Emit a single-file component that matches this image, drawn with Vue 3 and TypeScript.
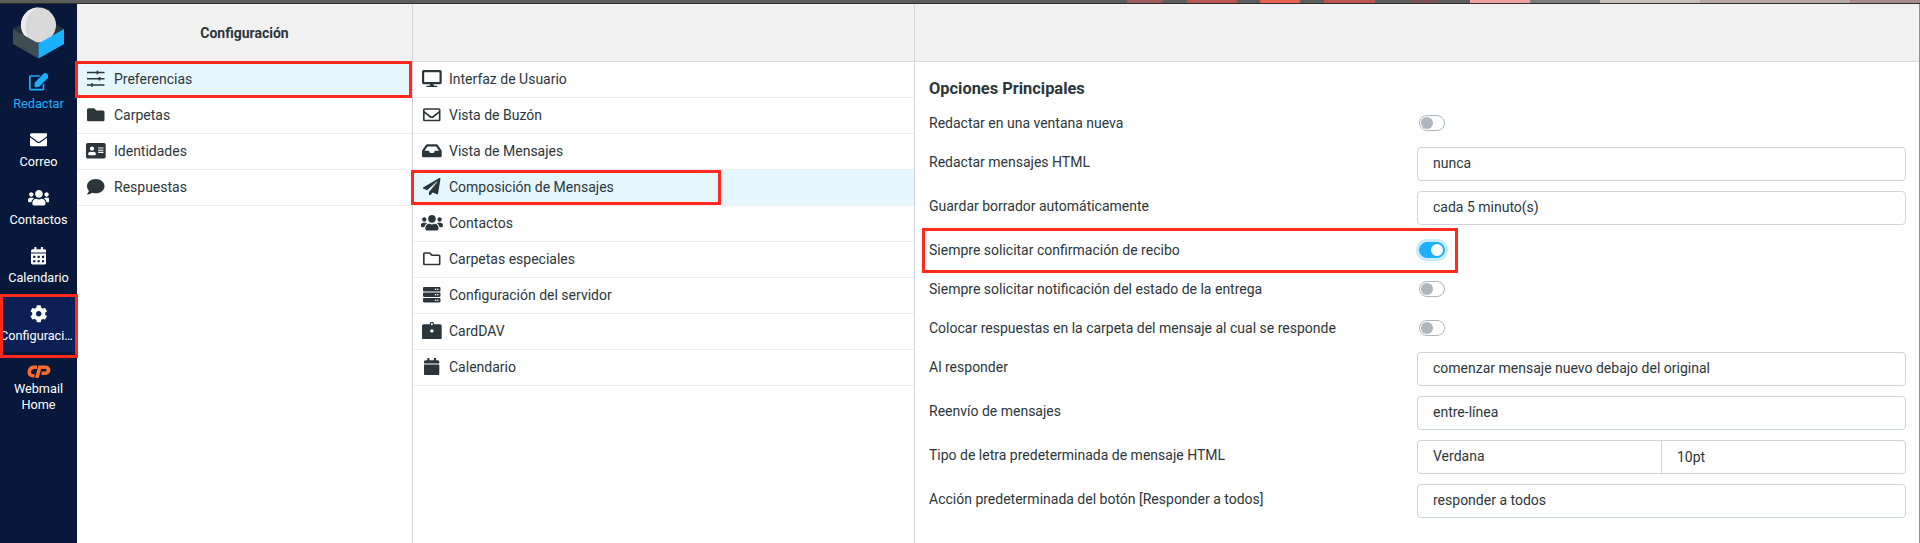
<script setup lang="ts">
const P = {
  edit: { v: '0 0 576 512', d: 'M402.3 344.9l32-32c5-5 13.7-1.5 13.7 5.7V464c0 26.5-21.5 48-48 48H48c-26.5 0-48-21.5-48-48V112c0-26.5 21.5-48 48-48h273.5c7.1 0 10.7 8.6 5.7 13.7l-32 32c-1.500 1.500-3.500 2.300-5.700 2.300H48v352h352V350.5c0-2.100.8-4.100 2.300-5.600zm156.6-201.8L296.3 405.700l-90.400 10c-26.200 2.900-48.500-19.200-45.600-45.600l10-90.400L432.900 17.100c22.900-22.900 59.900-22.900 82.700 0l43.200 43.200c22.900 22.900 22.900 60 .1 82.800z' },
  mail: { v: '0 0 512 512', d: 'M502.3 190.8c3.9-3.1 9.7-.2 9.7 4.7V400c0 26.5-21.5 48-48 48H48c-26.5 0-48-21.5-48-48V195.6c0-5 5.7-7.8 9.7-4.7 22.4 17.4 52.1 39.5 154.1 113.6 21.1 15.4 56.7 47.8 92.2 47.6 35.7.3 72-32.8 92.3-47.6 102-74.1 131.6-96.3 154-113.7zM256 320c23.2.4 56.6-29.2 73.4-41.4 132.7-96.3 142.8-104.7 173.4-128.7 5.8-4.5 9.2-11.5 9.2-18.9v-19c0-26.5-21.5-48-48-48H48C21.5 64 0 85.5 0 112v19c0 7.4 3.4 14.3 9.2 18.9 30.6 23.9 40.7 32.4 173.4 128.7 16.8 12.2 50.2 41.8 73.4 41.4z' },
  mailO: { v: '0 0 512 512', d: 'M464 64H48C21.49 64 0 85.49 0 112v288c0 26.51 21.49 48 48 48h416c26.51 0 48-21.49 48-48V112c0-26.51-21.49-48-48-48zm0 48v40.805c-22.422 18.259-58.168 46.651-134.587 106.49-16.841 13.247-50.201 45.072-73.413 44.701-23.208.375-56.579-31.459-73.413-44.701C106.18 199.465 70.425 171.067 48 152.805V112h416zM48 400V214.398c22.914 18.251 55.409 43.862 104.938 82.646 21.857 17.205 60.134 55.186 103.062 54.955 42.717.231 80.509-37.199 103.053-54.947 49.528-38.783 82.032-64.401 104.947-82.653V400H48z' },
  users: { v: '0 0 640 512', d: 'M96 224c35.3 0 64-28.7 64-64s-28.7-64-64-64-64 28.7-64 64 28.7 64 64 64zm448 0c35.3 0 64-28.7 64-64s-28.7-64-64-64-64 28.7-64 64 28.7 64 64 64zm32 32h-64c-17.6 0-33.5 7.1-45.1 18.6 40.3 22.1 68.9 62 75.1 109.4h66c17.7 0 32-14.3 32-32v-32c0-35.3-28.7-64-64-64zm-256 0c61.9 0 112-50.1 112-112S381.9 32 320 32 208 82.1 208 144s50.1 112 112 112zm76.8 32h-8.3c-20.8 10-43.9 16-68.5 16s-47.6-6-68.5-16h-8.3C179.6 288 128 339.6 128 403.2V432c0 26.5 21.5 48 48 48h288c26.5 0 48-21.5 48-48v-28.8c0-63.6-51.6-115.2-115.2-115.2zm-223.7-13.4C161.5 263.1 145.6 256 128 256H64c-35.3 0-64 28.7-64 64v32c0 17.7 14.3 32 32 32h65.9c6.3-47.4 34.9-87.3 75.2-109.4z' },
  calAlt: { v: '0 0 448 512', d: 'M0 464c0 26.5 21.5 48 48 48h352c26.5 0 48-21.5 48-48V192H0v272zm320-196c0-6.6 5.4-12 12-12h40c6.6 0 12 5.4 12 12v40c0 6.6-5.4 12-12 12h-40c-6.6 0-12-5.4-12-12v-40zm0 128c0-6.6 5.4-12 12-12h40c6.6 0 12 5.4 12 12v40c0 6.6-5.4 12-12 12h-40c-6.6 0-12-5.4-12-12v-40zM192 268c0-6.6 5.4-12 12-12h40c6.6 0 12 5.4 12 12v40c0 6.6-5.4 12-12 12h-40c-6.6 0-12-5.4-12-12v-40zm0 128c0-6.6 5.4-12 12-12h40c6.6 0 12 5.4 12 12v40c0 6.6-5.4 12-12 12h-40c-6.6 0-12-5.4-12-12v-40zM64 268c0-6.6 5.4-12 12-12h40c6.6 0 12 5.4 12 12v40c0 6.6-5.4 12-12 12H76c-6.6 0-12-5.4-12-12v-40zm0 128c0-6.6 5.4-12 12-12h40c6.6 0 12 5.4 12 12v40c0 6.6-5.4 12-12 12H76c-6.6 0-12-5.4-12-12v-40zM400 64h-48V16c0-8.8-7.2-16-16-16h-32c-8.8 0-16 7.2-16 16v48H160V16c0-8.8-7.2-16-16-16h-32c-8.8 0-16 7.2-16 16v48H48C21.5 64 0 85.5 0 112v48h448v-48c0-26.5-21.5-48-48-48z' },
  cal: { v: '0 0 448 512', d: 'M12 192h424c6.6 0 12 5.4 12 12v260c0 26.5-21.5 48-48 48H48c-26.5 0-48-21.5-48-48V204c0-6.6 5.4-12 12-12zm436-44v-36c0-26.5-21.5-48-48-48h-48V12c0-6.6-5.4-12-12-12h-40c-6.6 0-12 5.4-12 12v52H160V12c0-6.6-5.4-12-12-12h-40c-6.6 0-12 5.4-12 12v52H48C21.5 64 0 85.5 0 112v36c0 6.6 5.4 12 12 12h424c6.6 0 12-5.4 12-12z' },
  cog: { v: '0 0 512 512', d: 'M487.4 315.7l-42.6-24.6c4.3-23.2 4.3-47 0-70.2l42.6-24.6c4.9-2.8 7.1-8.6 5.5-14-11.1-35.6-30-67.8-54.7-94.6-3.8-4.1-10-5.1-14.8-2.3L380.8 110c-17.9-15.4-38.5-27.3-60.8-35.1V25.8c0-5.6-3.9-10.5-9.4-11.7-36.7-8.2-74.3-7.8-109.2 0-5.5 1.2-9.4 6.1-9.4 11.7V75c-22.2 7.9-42.8 19.8-60.8 35.1L88.7 85.5c-4.9-2.8-11-1.9-14.8 2.3-24.7 26.7-43.6 58.9-54.7 94.6-1.7 5.4.6 11.2 5.5 14L67.3 221c-4.3 23.2-4.3 47 0 70.2l-42.6 24.6c-4.9 2.8-7.1 8.6-5.5 14 11.1 35.6 30 67.8 54.7 94.6 3.8 4.1 10 5.1 14.8 2.3l42.6-24.6c17.9 15.4 38.5 27.3 60.8 35.1v49.2c0 5.6 3.9 10.5 9.4 11.7 36.7 8.2 74.3 7.8 109.2 0 5.5-1.2 9.4-6.1 9.4-11.7v-49.2c22.2-7.9 42.8-19.8 60.8-35.1l42.6 24.6c4.9 2.8 11 1.9 14.8-2.3 24.7-26.7 43.6-58.9 54.7-94.6 1.5-5.5-.7-11.3-5.6-14.1zM256 336c-44.1 0-80-35.9-80-80s35.9-80 80-80 80 35.9 80 80-35.9 80-80 80z' },
  folder: { v: '0 0 512 512', d: 'M464 128H272l-64-64H48C21.49 64 0 85.49 0 112v288c0 26.51 21.49 48 48 48h416c26.51 0 48-21.49 48-48V176c0-26.51-21.49-48-48-48z' },
  folderO: { v: '0 0 512 512', d: 'M464 128H272l-54.63-54.63c-6-6-14.14-9.37-22.63-9.37H48C21.49 64 0 85.49 0 112v288c0 26.51 21.49 48 48 48h416c26.51 0 48-21.49 48-48V176c0-26.51-21.49-48-48-48zm0 272H48V112h140.12l54.63 54.63c6 6 14.14 9.37 22.63 9.37H464v224z' },
  idcard: { v: '0 0 576 512', d: 'M528 32H48C21.5 32 0 53.5 0 80v352c0 26.5 21.5 48 48 48h480c26.5 0 48-21.5 48-48V80c0-26.5-21.5-48-48-48zm-352 96c35.3 0 64 28.7 64 64s-28.7 64-64 64-64-28.7-64-64 28.7-64 64-64zm112 236.8c0 10.6-10 19.2-22.4 19.2H86.4C74 384 64 375.4 64 364.8v-19.2c0-31.8 30.1-57.6 67.2-57.6h5c12.3 5.1 25.7 8 39.8 8s27.6-2.9 39.8-8h5c37.1 0 67.2 25.8 67.2 57.6v19.2zM512 312c0 4.4-3.6 8-8 8H360c-4.4 0-8-3.6-8-8v-16c0-4.4 3.6-8 8-8h144c4.4 0 8 3.6 8 8v16zm0-64c0 4.4-3.6 8-8 8H360c-4.4 0-8-3.6-8-8v-16c0-4.4 3.6-8 8-8h144c4.4 0 8 3.6 8 8v16zm0-64c0 4.4-3.6 8-8 8H360c-4.4 0-8-3.6-8-8v-16c0-4.4 3.6-8 8-8h144c4.4 0 8 3.6 8 8v16z' },
  comment: { v: '0 0 512 512', d: 'M256 32C114.6 32 0 125.1 0 240c0 49.6 21.4 95 57 130.7C44.5 421.1 2.7 466 2.2 466.5c-2.2 2.3-2.8 5.7-1.5 8.7S4.8 480 8 480c66.3 0 116-31.8 140.6-51.4 32.7 12.3 69 19.4 107.4 19.4 141.4 0 256-93.1 256-208S397.4 32 256 32z' },
  desktop: { v: '0 0 576 512', d: 'M528 0H48C21.5 0 0 21.5 0 48v320c0 26.5 21.5 48 48 48h192l-16 48h-72c-13.3 0-24 10.7-24 24s10.7 24 24 24h272c13.3 0 24-10.7 24-24s-10.7-24-24-24h-72l-16-48h192c26.5 0 48-21.5 48-48V48c0-26.5-21.5-48-48-48zm-16 352H64V64h448v288z' },
  inbox: { v: '0 0 576 512', d: 'M567.938 243.908L462.25 85.374A48.003 48.003 0 0 0 422.311 64H153.689a48 48 0 0 0-39.938 21.374L8.062 243.908A47.994 47.994 0 0 0 0 270.533V400c0 26.51 21.49 48 48 48h480c26.51 0 48-21.49 48-48V270.533a47.994 47.994 0 0 0-8.062-26.625zM162.252 128h251.497l85.333 128H376l-32 64H232l-32-64H76.918l85.334-128z' },
  plane: { v: '0 0 512 512', d: 'M476 3.2L12.5 270.6c-18.1 10.4-15.8 35.6 2.2 43.2L121 358.4l287.3-253.2c5.5-4.9 13.3 2.6 8.6 8.3L176 407v80.5c0 23.6 28.5 32.9 42.5 15.8L282 426l124.6 52.2c14.2 6 30.4-2.9 33-18.2l72-432C515 7.8 493.3-6.8 476 3.2z' },
  server: { v: '0 0 512 512', d: 'M480 160H32c-17.673 0-32-14.327-32-32V64c0-17.673 14.327-32 32-32h448c17.673 0 32 14.327 32 32v64c0 17.673-14.327 32-32 32zm-48-88c-13.255 0-24 10.745-24 24s10.745 24 24 24 24-10.745 24-24-10.745-24-24-24zm-64 0c-13.255 0-24 10.745-24 24s10.745 24 24 24 24-10.745 24-24-10.745-24-24-24zm112 248H32c-17.673 0-32-14.327-32-32v-64c0-17.673 14.327-32 32-32h448c17.673 0 32 14.327 32 32v64c0 17.673-14.327 32-32 32zm-48-88c-13.255 0-24 10.745-24 24s10.745 24 24 24 24-10.745 24-24-10.745-24-24-24zm-64 0c-13.255 0-24 10.745-24 24s10.745 24 24 24 24-10.745 24-24-10.745-24-24-24zm112 248H32c-17.673 0-32-14.327-32-32v-64c0-17.673 14.327-32 32-32h448c17.673 0 32 14.327 32 32v64c0 17.673-14.327 32-32 32zm-48-88c-13.255 0-24 10.745-24 24s10.745 24 24 24 24-10.745 24-24-10.745-24-24-24zm-64 0c-13.255 0-24 10.745-24 24s10.745 24 24 24 24-10.745 24-24-10.745-24-24-24z' },
  badge: { v: '0 0 576 512', d: 'M48 64h184V30a30 30 0 0 1 30-30h52a30 30 0 0 1 30 30v34h184a48 48 0 0 1 48 48v352a48 48 0 0 1-48 48H48a48 48 0 0 1-48-48V112a48 48 0 0 1 48-48zM264 36v60h48V36zM288 210a50 50 0 1 0 .01 0zM192 430v-26c0-32 38-52 96-52s96 20 96 52v26z' },
  sliders: { v: '0 0 512 512', d: 'M0 52h280V22h52v30h180v44H332v30h-52V96H0zM0 234h340v-30h52v30h120v44H392v30h-52v-30H0zM0 416h120v-30h52v30h340v44H172v30h-52v-30H0z' }
}

const nav = [
  { label: 'Redactar', icon: P.edit, cls: 'active' },
  { label: 'Correo', icon: P.mail, cls: '' },
  { label: 'Contactos', icon: P.users, cls: '' },
  { label: 'Calendario', icon: P.calAlt, cls: '' },
  { label: 'Configuración', icon: P.cog, cls: 'selected' }
]

const sections = [
  { label: 'Preferencias', icon: P.sliders, on: true },
  { label: 'Carpetas', icon: P.folder, on: false },
  { label: 'Identidades', icon: P.idcard, on: false },
  { label: 'Respuestas', icon: P.comment, on: false }
]

const prefs = [
  { label: 'Interfaz de Usuario', icon: P.desktop, on: false },
  { label: 'Vista de Buzón', icon: P.mailO, on: false },
  { label: 'Vista de Mensajes', icon: P.inbox, on: false },
  { label: 'Composición de Mensajes', icon: P.plane, on: true },
  { label: 'Contactos', icon: P.users, on: false },
  { label: 'Carpetas especiales', icon: P.folderO, on: false },
  { label: 'Configuración del servidor', icon: P.server, on: false },
  { label: 'CardDAV', icon: P.badge, on: false },
  { label: 'Calendario', icon: P.cal, on: false }
]

type Opt = { label: string; toggle?: boolean; on?: boolean; values?: string[] }
const options: Opt[] = [
  { label: 'Redactar en una ventana nueva', toggle: true },
  { label: 'Redactar mensajes HTML', values: ['nunca'] },
  { label: 'Guardar borrador automáticamente', values: ['cada 5 minuto(s)'] },
  { label: 'Siempre solicitar confirmación de recibo', toggle: true, on: true },
  { label: 'Siempre solicitar notificación del estado de la entrega', toggle: true },
  { label: 'Colocar respuestas en la carpeta del mensaje al cual se responde', toggle: true },
  { label: 'Al responder', values: ['comenzar mensaje nuevo debajo del original'] },
  { label: 'Reenvío de mensajes', values: ['entre-línea'] },
  { label: 'Tipo de letra predeterminada de mensaje HTML', values: ['Verdana', '10pt'] },
  { label: 'Acción predeterminada del botón [Responder a todos]', values: ['responder a todos'] }
]
</script>

<template>
  <div class="page">
    <div class="strip"></div>
    <div class="shell">
      <nav class="rail">
        <svg class="logo" viewBox="0 4 77 58" width="77" height="58">
          <path d="M13 29 38.500 14 64 29 38.500 44z" fill="#27343a" />
          <circle cx="38.500" cy="25" r="17.500" fill="#d9d9d9" />
          <path d="M38.500 7.500a17.500 17.500 0 0 0-9 32.500c-4-4-9-26 9-32.500z" fill="#ececec" />
          <path d="M13 29 38.500 43.500V58.500L13 44z" fill="#3f4e53" />
          <path d="M64 29 38.500 43.500V58.500L64 44z" fill="#1ab2ff" />
        </svg>
        <a v-for="n in nav" :key="n.label" class="rail-item" :class="n.cls">
          <svg class="ico" :viewBox="n.icon.v">
            <path :d="n.icon.d" />
            <path v-if="n.cls === 'active'" d="M190 290 432 48l96 96L286 386l-108 12z" />
          </svg>
          <span class="rail-label">{{ n.label }}</span>
          <i v-if="n.cls === 'selected'" class="mark mark-rail"></i>
        </a>
        <a class="rail-item home">
          <svg class="cp" viewBox="0 0 24 13" width="24" height="13">
            <path d="M10 2.300H7.500C4.500 2.300 2.600 4.200 2.300 6.600 2 9 3.500 10.800 6 10.800H7.500" />
            <path d="M9.800 13 12.800 2.300H18C20.500 2.300 21.900 3.600 21.600 5.300 21.300 7.200 19.800 8.300 17.500 8.300H14.500" />
          </svg>
          <span class="home-label">Webmail<br />Home</span>
        </a>
      </nav>

      <section class="col col-a">
        <header class="head">Configuración</header>
        <div v-for="s in sections" :key="s.label" class="row" :class="{ on: s.on }">
          <span class="row-ico"><svg class="ico" :viewBox="s.icon.v"><path :d="s.icon.d" /></svg></span>
          {{ s.label }}
          <i v-if="s.on" class="mark mark-a"></i>
        </div>
      </section>

      <section class="col col-b">
        <header class="head"></header>
        <div v-for="s in prefs" :key="s.label" class="row" :class="{ on: s.on }">
          <span class="row-ico"><svg class="ico" :viewBox="s.icon.v"><path :d="s.icon.d" /></svg></span>
          {{ s.label }}
          <i v-if="s.on" class="mark mark-b"></i>
        </div>
      </section>

      <section class="col col-c">
        <header class="head"></header>
        <div class="form">
          <h2 class="title">Opciones Principales</h2>
          <div
            v-for="o in options"
            :key="o.label"
            class="opt"
            :class="{ 'opt-toggle': o.toggle }"
          >
            <label class="opt-label">{{ o.label }}</label>
            <span v-if="o.toggle" class="switch" :class="{ 'switch-on': o.on }"><b></b></span>
            <div v-else class="field">
              <span v-for="v in o.values" :key="v" class="cell">{{ v }}</span>
            </div>
            <i v-if="o.on" class="mark mark-c"></i>
          </div>
        </div>
      </section>
    </div>
  </div>
</template>

<style>
html, body { margin: 0; padding: 0; background: #fff; }
</style>

<style scoped>
.page {
  height: 100vh;
  display: flex;
  flex-direction: column;
  overflow: hidden;
  font-family: Roboto, "Liberation Sans", sans-serif;
  font-size: 14px;
  color: #2c363a;
}
.strip {
  height: 3px;
  flex: none;
  border-bottom: 1px solid #2e2e2e;
  background: linear-gradient(90deg,
    #5c5c5c 0 1127px, #9b5a5a 1127px 1163px, #5c5c5c 1163px 1187px, #b9574f 1187px 1237px,
    #5c5c5c 1237px 1260px, #e8604f 1260px 1300px, #5c5c5c 1300px 1324px, #b9564f 1324px 1375px,
    #5c5c5c 1375px 1411px, #7a4f4f 1411px 1437px, #5c5c5c 1437px 1470px, #eea0a0 1470px 1530px,
    #7d7d7d 1530px 1600px, #c8c0bb 1600px 1700px, #b8a8a5 1700px 1850px, #a88a8a 1850px 1920px);
}
.shell {
  flex: 1;
  display: grid;
  grid-template-columns: 77px 336px 502px 1fr;
  min-height: 0;
}
.ico { height: 17.5px; width: auto; display: block; fill: currentColor; }

.rail {
  background: #07183a;
  color: #fff;
  display: flex;
  flex-direction: column;
}
.logo { display: block; flex: none; }
.rail-item {
  position: relative;
  height: 58px;
  flex: none;
  display: flex;
  flex-direction: column;
  align-items: center;
  padding-top: 11px;
  box-sizing: border-box;
  font-size: 12.7px;
  line-height: 20px;
}
.rail-item.active { color: #1eb0ff; }
.rail-item.selected { background: #0c2056; }
.rail-label {
  display: block;
  width: 100%;
  margin-top: 3px;
  text-align: center;
  white-space: nowrap;
  overflow: hidden;
  text-overflow: ellipsis;
}
.home { padding-top: 13px; height: auto; }
.cp { display: block; fill: none; stroke: #ff6c2c; stroke-width: 3.6; }
.home-label { display: block; text-align: center; line-height: 16px; margin-top: 3px; }

.col { min-width: 0; border-right: 1px solid #cdd5da; }
.col-c { border-right-color: #8f8f8f; }
.head {
  height: 58px;
  box-sizing: border-box;
  background: #f1f1f1;
  border-bottom: 1px solid #d6d9db;
  display: flex;
  align-items: center;
  justify-content: center;
  font-weight: 700;
}
.row {
  position: relative;
  height: 36px;
  box-sizing: border-box;
  display: flex;
  align-items: center;
  padding-left: 8px;
  border-bottom: 1px solid #ecedee;
  gap: 7px;
  padding-bottom: 2px;
}
.col-b .row { gap: 6px; }
.row.on { background: #e4f6fe; }
.row-ico { width: 22px; display: flex; justify-content: center; flex: none; }

.form { padding: 0 13px 0 14px; }
.title {
  margin: 0;
  height: 41px;
  box-sizing: border-box;
  padding-top: 16px;
  font-size: 16.4px;
  line-height: 22px;
  font-weight: 700;
}
.opt {
  position: relative;
  display: grid;
  grid-template-columns: 488px 1fr;
  height: 44px;
  box-sizing: border-box;
  padding: 5px 0;
}
.opt-toggle { height: 39px; align-items: center; }
.opt-label { line-height: 20px; padding-top: 5px; align-self: start; }
.switch {
  margin-left: 2px;
  width: 26px;
  height: 16px;
  box-sizing: border-box;
  border: 1px solid #adb5bd;
  border-radius: 8px;
  background: #fff;
  display: flex;
  align-items: center;
  padding: 0 1px;
}
.switch b { width: 12px; height: 12px; border-radius: 50%; background: #adb5bd; }
.switch-on {
  background: #1eb0ff;
  border-color: #1eb0ff;
  justify-content: flex-end;
  box-shadow: 0 0 0 3px rgba(30, 176, 255, .25);
}
.switch-on b { background: #fff; }
.field {
  display: flex;
  height: 34px;
  box-sizing: border-box;
  border: 1px solid #ced4da;
  border-radius: 4px;
  background: #fff;
}
.cell { flex: 1; padding-left: 15px; line-height: 30px; min-width: 0; }
.cell + .cell { border-left: 1px solid #ced4da; padding-left: 15px; line-height: 33px; }

.mark { position: absolute; border: 3px solid #ff2a1c; box-sizing: border-box; z-index: 5; pointer-events: none; }
.mark-rail { left: 0; right: -1px; top: 0; bottom: -6px; }
.mark-a { left: -2px; right: 0; top: -1px; bottom: -1px; }
.mark-b { left: -2px; width: 310px; top: 0; height: 35px; }
.mark-c { left: -7px; width: 536px; top: -2px; bottom: -4px; }
</style>
